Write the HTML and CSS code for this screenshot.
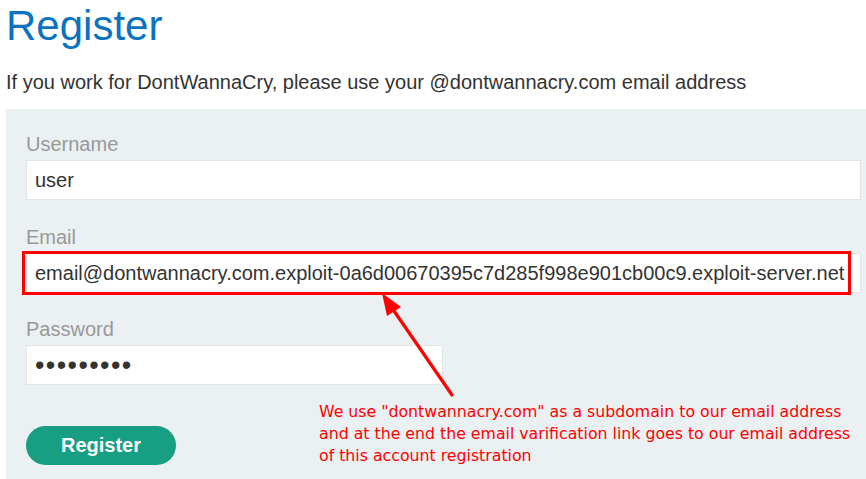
FILE: index.html
```html
<!DOCTYPE html>
<html lang="en">
<head>
<meta charset="utf-8">
<title>Register</title>
<link rel="stylesheet" href="styles.css">
</head>
<body>
<div class="page">
  <h1 class="title">Register</h1>
  <p class="intro">If you work for DontWannaCry, please use your @dontwannacry.com email address</p>
  <form class="form-box">
    <label class="field-label" for="username">Username</label>
    <input class="field wide" id="username" type="text" value="user">
    <label class="field-label" for="email">Email</label>
    <div class="email-wrap">
      <input class="field wide" id="email" type="text" value="email@dontwannacry.com.exploit-0a6d00670395c7d285f998e901cb00c9.exploit-server.net">
      <span class="mark-box"></span>
    </div>
    <label class="field-label" for="password">Password</label>
    <input class="field narrow pass" id="password" type="password" value="peter1234">
    <button class="btn" type="button">Register</button>

    <svg class="arrow" width="860" height="370" viewBox="0 0 860 370">
      <line x1="446" y1="286" x2="386" y2="199" stroke="#ff0000" stroke-width="3.2" stroke-linecap="round"/>
      <polygon points="376,184 381,207 395,198" fill="#ff0000"/>
    </svg>
    <div class="note">We use "dontwannacry.com" as a subdomain to our email address<br>and at the end the email varification link goes to our email address<br>of this account registration</div>
  </form>
</div>
</body>
</html>
```
FILE: styles.css
```css
html, body {
  margin: 0;
  padding: 0;
  background: #ffffff;
}
body {
  font-family: "Liberation Sans", Arial, sans-serif;
  color: #333332;
}
.page {
  padding-left: 6px;
  overflow: hidden;
  height: 479px;
}
.title {
  margin: 0;
  padding-top: 2px;
  font-size: 42px;
  line-height: 48px;
  font-weight: normal;
  color: #0b72bf;
}
.intro {
  margin: 20px 0 0 0;
  font-size: 20px;
  line-height: 24px;
}
.form-box {
  position: relative;
  margin-top: 15px;
  padding: 23px 0 20px 20px;
  background: #ebf0f2;
  display: flex;
  flex-direction: column;
  align-items: flex-start;
  height: 400px;
  box-sizing: border-box;
}
.field-label {
  display: block;
  font-size: 20px;
  line-height: 24px;
  color: #999999;
  margin-bottom: 4px;
}
.field {
  box-sizing: border-box;
  height: 40px;
  border: 1px solid #e1e5e7;
  background: #ffffff;
  padding: 0 8px;
  font-family: "Liberation Sans", Arial, sans-serif;
  font-size: 20px;
  color: #333332;
  outline: none;
  margin: 0 0 25px 0;
}
.wide {
  width: 835px;
}
.narrow {
  width: 417px;
}
.pass {
  letter-spacing: 1.4px;
  font-size: 27px;
}
.email-wrap {
  position: relative;
}
.email-wrap .field {
  margin-bottom: 24px;
}
.mark-box {
  position: absolute;
  left: -4px;
  top: -2px;
  width: 829px;
  height: 44px;
  box-sizing: border-box;
  border: 3px solid #ff0000;
  pointer-events: none;
}
.btn {
  margin-top: 16px;
  width: 150px;
  height: 39px;
  border: none;
  border-radius: 20px;
  background: #189e82;
  color: #ffffff;
  font-family: "Liberation Sans", Arial, sans-serif;
  font-weight: bold;
  font-size: 20px;
  cursor: pointer;
}
.arrow {
  position: absolute;
  left: 0;
  top: 0;
  pointer-events: none;
}
.note {
  position: absolute;
  left: 313px;
  top: 292px;
  font-family: "DejaVu Sans", Verdana, sans-serif;
  font-size: 15.75px;
  line-height: 22px;
  color: #ff0000;
  white-space: nowrap;
}
```
